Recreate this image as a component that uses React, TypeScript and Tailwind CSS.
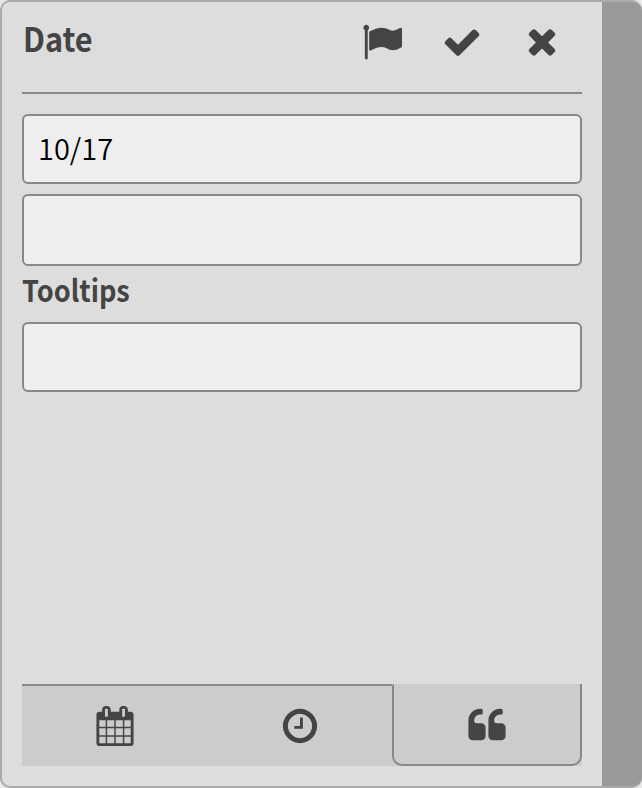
import type { ReactNode } from "react";

const FLAG =
  "M320 256q0 72-64 110v1266q0 13-9.5 22.5t-22.5 9.5h-64q-13 0-22.5-9.5t-9.5-22.5v-1266q-64-38-64-110 0-53 37.5-90.5t90.5-37.5 90.5 37.5 37.5 90.5zm1472 64v763q0 25-12.5 38.5t-39.5 27.5q-215 116-369 116-61 0-123.5-22t-108.5-48-115.5-48-142.5-22q-192 0-464 146-17 9-33 9-26 0-45-19t-19-45v-742q0-32 31-55 21-14 79-43 236-120 421-120 107 0 200 29t219 88q38 19 88 19 54 0 117.5-21t110-47 88-47 54.5-21q26 0 45 19t19 45z";
const CHECK =
  "M1671 566q0 40-28 68l-724 724-136 136q-28 28-68 28t-68-28l-136-136-362-362q-28-28-28-68t28-68l136-136q28-28 68-28t68 28l294 295 656-657q28-28 68-28t68 28l136 136q28 28 28 68z";
const TIMES =
  "M1490 1322q0 40-28 68l-136 136q-28 28-68 28t-68-28l-294-294-294 294q-28 28-68 28t-68-28l-136-136q-28-28-28-68t28-68l294-294-294-294q-28-28-28-68t28-68l136-136q28-28 68-28t68 28l294 294 294-294q28-28 68-28t68 28l136 136q28 28 28 68t-28 68l-294 294 294 294q28 28 28 68z";
const CLOCK =
  "M1024 544v448q0 14-9 23t-23 9h-320q-14 0-23-9t-9-23v-64q0-14 9-23t23-9h224v-352q0-14 9-23t23-9h64q14 0 23 9t9 23zm416 352q0-148-73-273t-198-198-273-73-273 73-198 198-73 273 73 273 198 198 273 73 273-73 198-198 73-273zm224 0q0 209-103 385.5t-279.5 279.5-385.5 103-385.5-103-279.5-279.5-103-385.5 103-385.5 279.5-279.5 385.5-103 385.5 103 279.5 279.5 103 385.5z";
const QUOTE =
  "M832 960v384q0 80-56 136t-136 56h-384q-80 0-136-56t-56-136v-704q0-104 40.5-198.5t109.5-163.5 163.5-109.5 198.5-40.5h64q26 0 45 19t19 45v128q0 26-19 45t-45 19h-64q-106 0-181 75t-75 181v32q0 40 28 68t68 28h224q80 0 136 56t56 136zm896 0v384q0 80-56 136t-136 56h-384q-80 0-136-56t-56-136v-704q0-104 40.5-198.5t109.5-163.5 163.5-109.5 198.5-40.5h64q26 0 45 19t19 45v128q0 26-19 45t-45 19h-64q-106 0-181 75t-75 181v32q0 40 28 68t68 28h224q80 0 136 56t56 136z";
const CALENDAR =
  "M192 1664h288v-288h-288v288zm352 0h320v-288h-320v288zm-352-352h288v-320h-288v320zm352 0h320v-320h-320v320zm-352-384h288v-288h-288v288zm736 736h320v-288h-320v288zm-384-736h320v-288h-320v288zm768 736h288v-288h-288v288zm-384-352h320v-320h-320v320zm-352-864v-288q0-13-9.5-22.5t-22.5-9.5h-64q-13 0-22.5 9.5t-9.5 22.5v288q0 13 9.5 22.5t22.5 9.5h64q13 0 22.5-9.5t9.5-22.5zm736 864h288v-320h-288v320zm-384-384h320v-288h-320v288zm384 0h288v-288h-288v288zm32-480v-288q0-13-9.5-22.5t-22.5-9.5h-64q-13 0-22.5 9.5t-9.5 22.5v288q0 13 9.5 22.5t22.5 9.5h64q13 0 22.5-9.5t9.5-22.5zm384-64v1280q0 52-38 90t-90 38h-1408q-52 0-90-38t-38-90v-1280q0-52 38-90t90-38h128v-96q0-66 47-113t113-47h64q66 0 113 47t47 113v96h384v-96q0-66 47-113t113-47h64q66 0 113 47t47 113v96h128q52 0 90 38t38 90z";

function Icon({ d, className = "" }: { d: string; className?: string }) {
  return (
    <svg viewBox="0 0 1792 1792" className={`block size-10 shrink-0 fill-[#444] ${className}`} aria-hidden="true">
      <path d={d} />
    </svg>
  );
}

function Field({ className, children }: { className: string; children?: ReactNode }) {
  return (
    <div className={`flex items-center rounded-md border-2 border-[#888] bg-[#eee] px-3.5 ${className}`}>
      {children}
    </div>
  );
}

export default function App() {
  return (
    <div className="h-[788px] w-[642px] bg-[#e8e8e8] font-['Noto_Sans_CJK_JP',sans-serif]">
      <div className="flex h-full w-full overflow-hidden rounded-[10px] border-2 border-r-0 border-[#aaa] bg-[#ddd]">
        <main className="flex w-[600px] shrink-0 flex-col px-5 pb-5">
          <header className="flex h-[92px] shrink-0 justify-between border-b-2 border-[#888]">
            <h1 className="mt-3.5 ml-px origin-left scale-x-[0.93] text-[33px] leading-[44px] font-bold text-[#444]">
              Date
            </h1>
            <div className="mr-5 flex gap-10 pt-5">
              <Icon d={FLAG} />
              <Icon d={CHECK} />
              <Icon d={TIMES} className="-mt-px" />
            </div>
          </header>
          <Field className="mt-5 h-[70px] shrink-0">
            <span className="pb-[5px] text-[29px] leading-10 font-[350] text-black">10/17</span>
          </Field>
          <Field className="mt-2.5 h-[72px] shrink-0" />
          <h2 className="h-14 w-fit origin-left scale-x-[0.905] pt-px text-[30px] leading-[44px] font-bold text-[#444]">
            Tooltips
          </h2>
          <Field className="h-[70px] shrink-0" />
          <nav className="mt-auto flex h-[82px] shrink-0 bg-[#ccc]">
            <div className="flex w-[370px] border-t-2 border-[#888]">
              <div className="flex w-[185px] justify-center pt-5">
                <Icon d={CALENDAR} />
              </div>
              <div className="flex w-[185px] justify-center pt-5">
                <Icon d={CLOCK} />
              </div>
            </div>
            <div className="flex w-[190px] justify-center rounded-b-[10px] rounded-tl-[2px] border-x-2 border-b-2 border-[#888] pt-[22px]">
              <Icon d={QUOTE} />
            </div>
          </nav>
        </main>
        <aside className="flex-1 bg-[#999]" />
      </div>
    </div>
  );
}
